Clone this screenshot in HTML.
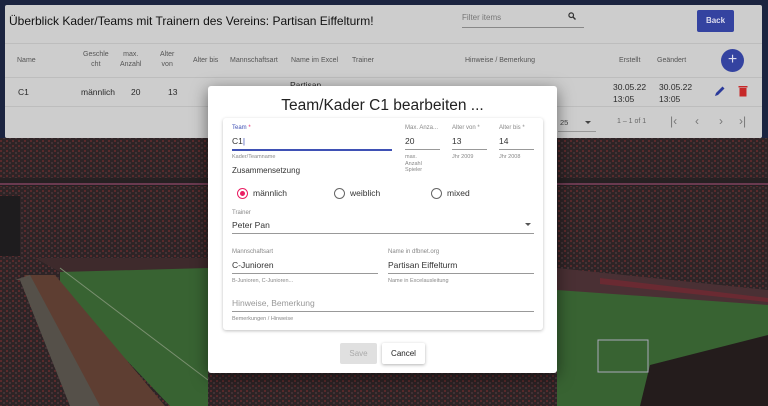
<!DOCTYPE html>
<html><head><meta charset="utf-8"><style>
*{box-sizing:border-box;margin:0;padding:0}
body{width:768px;height:406px;overflow:hidden;position:relative;font-family:"Liberation Sans",sans-serif;background:#1b2440}
.abs{position:absolute}
.card{left:5px;top:5px;width:757px;height:133px;background:#cdcdcd;border-radius:2px}
.t{color:#2a2a2a}
.hd{font-size:7px;color:#555;text-align:center;line-height:10px}
.dlg{left:208px;top:86px;width:349px;height:287px;background:#fff;border-radius:3px;box-shadow:0 4px 16px rgba(0,0,0,.5)}
.inner{left:15px;top:32px;width:320px;height:212px;background:#fff;border-radius:3px;box-shadow:0 1px 3px rgba(0,0,0,.25)}
.lbl{font-size:6px;color:#888}
.val{font-size:8.5px;color:#333}
.ln{height:1px;background:#999}
.hint{font-size:5.5px;color:#888;line-height:6.5px}
.radio{width:11px;height:11px;border-radius:50%;border:1.5px solid #666}
.pg{font-size:12px;color:#777;white-space:nowrap}
</style></head><body>
<svg class="abs" style="left:0;top:0" width="768" height="406">
<defs>
<pattern id="crowd" width="6" height="5" patternUnits="userSpaceOnUse">
<rect width="6" height="5" fill="#2e2426"/>
<rect x="0" y="0" width="2" height="2" fill="#5a2a2c"/>
<rect x="3" y="2" width="2" height="2" fill="#443236"/>
</pattern>
</defs>
<rect x="0" y="0" width="768" height="406" fill="#1b2440"/>
<rect x="0" y="138" width="768" height="268" fill="url(#crowd)"/>
<rect x="0" y="178" width="768" height="8" fill="#262022"/>
<rect x="0" y="183" width="768" height="2" fill="#6a3a50"/>
<rect x="0" y="196" width="20" height="60" fill="#1e1c1e"/>
<polygon points="60,265 208,262 208,406 170,406 60,290" fill="#386332"/>
<polygon points="35,258 208,258 208,268 60,272" fill="#3e2a2c"/>
<polygon points="25,275 55,275 165,406 90,406 25,300" fill="#5e3e32"/>
<polygon points="15,280 30,275 100,406 60,406" fill="#555049"/>
<polygon points="0,280 20,280 70,406 0,406" fill="url(#crowd)"/>
<polygon points="557,285 768,300 768,340 720,360 640,406 557,406" fill="#386332"/>
<polygon points="557,268 768,290 768,305 557,290" fill="#4a3034"/>
<polygon points="600,278 768,298 768,302 600,284" fill="#6a2a32"/>
<polygon points="650,365 768,335 768,406 640,406" fill="#241c1c"/>
<rect x="598" y="340" width="50" height="32" fill="none" stroke="#aab" stroke-width="1"/>
<line x1="60" y1="268" x2="208" y2="380" stroke="#7a9070" stroke-width="1"/>
</svg>
<div class="abs card">
  <div class="abs t" style="left:4px;top:9px;font-size:12px;color:#111">Überblick Kader/Teams mit Trainern des Vereins: Partisan Eiffelturm!</div>
  <div class="abs" style="left:457px;top:8px;font-size:8px;color:#777">Filter items</div>
  <div class="abs" style="left:457px;top:22px;width:122px;height:1px;background:#888"></div>
  <svg class="abs" style="left:563px;top:7px" width="8" height="8"><circle cx="3.2" cy="3.2" r="2.3" stroke="#333" stroke-width="1.2" fill="none"/><line x1="5" y1="5" x2="7.5" y2="7.5" stroke="#333" stroke-width="1.4"/></svg>
  <div class="abs" style="left:692px;top:5px;width:37px;height:22px;background:#3443a0;border-radius:2px;color:#dde;font-size:8px;font-weight:bold;text-align:center;line-height:22px">Back</div>
  <div class="abs" style="left:0;top:38px;width:757px;height:1px;background:#bdbdbd"></div>
  <div class="abs hd" style="left:12px;top:51px">Name</div>
  <div class="abs hd" style="left:78px;top:45px">Geschle<br>cht</div>
  <div class="abs hd" style="left:115px;top:45px">max.<br>Anzahl</div>
  <div class="abs hd" style="left:155px;top:45px">Alter<br>von</div>
  <div class="abs hd" style="left:188px;top:51px">Alter bis</div>
  <div class="abs hd" style="left:225px;top:51px">Mannschaftsart</div>
  <div class="abs hd" style="left:286px;top:51px">Name im Excel</div>
  <div class="abs hd" style="left:347px;top:51px">Trainer</div>
  <div class="abs hd" style="left:460px;top:51px">Hinweise / Bemerkung</div>
  <div class="abs hd" style="left:614px;top:51px">Erstellt</div>
  <div class="abs hd" style="left:652px;top:51px">Geändert</div>
  <div class="abs" style="left:716px;top:44px;width:23px;height:23px;border-radius:50%;background:#3443a0;color:#dde;font-size:16px;text-align:center;line-height:22px">+</div>
  <div class="abs" style="left:0;top:72px;width:757px;height:1px;background:#bdbdbd"></div>
  <div class="abs t" style="left:13px;top:82px;font-size:8.5px">C1</div>
  <div class="abs t" style="left:76px;top:82px;font-size:8.5px">männlich</div>
  <div class="abs t" style="left:126px;top:82px;font-size:8.5px">20</div>
  <div class="abs t" style="left:163px;top:82px;font-size:8.5px">13</div>
  <div class="abs t" style="left:285px;top:75px;font-size:8.5px">Partisan</div>
  <div class="abs t" style="left:608px;top:76px;font-size:8.5px;line-height:12px">30.05.22<br>13:05</div>
  <div class="abs t" style="left:654px;top:76px;font-size:8.5px;line-height:12px">30.05.22<br>13:05</div>
  <svg class="abs" style="left:709px;top:80px" width="12" height="12"><path d="M1 11 L2 8 L8.5 1.5 L10.5 3.5 L4 10 Z" fill="#2b3a9a"/></svg>
  <svg class="abs" style="left:733px;top:80px" width="10" height="12"><rect x="0.5" y="1" width="9" height="1.5" fill="#c62828"/><rect x="1.5" y="3" width="7" height="8.5" fill="#c62828"/></svg>
  <div class="abs" style="left:0;top:101px;width:757px;height:1px;background:#bdbdbd"></div>
  <div class="abs" style="left:555px;top:113px;font-size:7.5px;color:#444">25</div>
  <div class="abs" style="left:580px;top:116px;border-left:3px solid transparent;border-right:3px solid transparent;border-top:3px solid #444"></div>
  <div class="abs" style="left:553px;top:126px;width:38px;height:1px;background:#999"></div>
  <div class="abs" style="left:612px;top:113px;font-size:7px;color:#666">1 – 1 of 1</div>
  <div class="abs pg" style="left:665px;top:109px">|‹</div>
  <div class="abs pg" style="left:690px;top:109px">‹</div>
  <div class="abs pg" style="left:714px;top:109px">›</div>
  <div class="abs pg" style="left:734px;top:109px">›|</div>
</div>
<div class="abs dlg">
  <div class="abs" style="left:0;top:11px;width:349px;text-align:center;font-size:15.5px;color:#222">Team/Kader C1 bearbeiten ...</div>
  <div class="abs inner">
    <div class="abs lbl" style="left:9px;top:7px;color:#3f51b5">Team <span style="color:#e91e63">*</span></div>
    <div class="abs val" style="left:9px;top:18px">C1<span style="color:#3f51b5">|</span></div>
    <div class="abs" style="left:9px;top:31px;width:160px;height:2px;background:#3f51b5"></div>
    <div class="abs hint" style="left:9px;top:36px">Kader/Teamname</div>
    <div class="abs" style="left:9px;top:48px;font-size:8px;color:#333">Zusammensetzung</div>
    <div class="abs lbl" style="left:182px;top:7px">Max. Anza...</div>
    <div class="abs val" style="left:182px;top:18px">20</div>
    <div class="abs ln" style="left:182px;top:31px;width:35px"></div>
    <div class="abs hint" style="left:182px;top:36px">max.<br>Anzahl<br>Spieler</div>
    <div class="abs lbl" style="left:229px;top:7px">Alter von *</div>
    <div class="abs val" style="left:229px;top:18px">13</div>
    <div class="abs ln" style="left:229px;top:31px;width:35px"></div>
    <div class="abs hint" style="left:229px;top:36px">Jhr 2009</div>
    <div class="abs lbl" style="left:276px;top:7px">Alter bis *</div>
    <div class="abs val" style="left:276px;top:18px">14</div>
    <div class="abs ln" style="left:276px;top:31px;width:35px"></div>
    <div class="abs hint" style="left:276px;top:36px">Jhr 2008</div>
    <div class="abs radio" style="left:14px;top:70px;border-color:#e91e63"><div style="width:5px;height:5px;border-radius:50%;background:#e91e63;margin:1.5px"></div></div>
    <div class="abs val" style="left:30px;top:70px">männlich</div>
    <div class="abs radio" style="left:111px;top:70px"></div>
    <div class="abs val" style="left:127px;top:70px">weiblich</div>
    <div class="abs radio" style="left:208px;top:70px"></div>
    <div class="abs val" style="left:224px;top:70px">mixed</div>
    <div class="abs lbl" style="left:9px;top:92px">Trainer</div>
    <div class="abs val" style="left:9px;top:102px">Peter Pan</div>
    <div class="abs" style="left:302px;top:105px;border-left:3px solid transparent;border-right:3px solid transparent;border-top:3px solid #555"></div>
    <div class="abs ln" style="left:9px;top:115px;width:302px"></div>
    <div class="abs lbl" style="left:9px;top:131px">Mannschaftsart</div>
    <div class="abs val" style="left:9px;top:142px">C-Junioren</div>
    <div class="abs ln" style="left:9px;top:155px;width:146px"></div>
    <div class="abs hint" style="left:9px;top:160px">B-Junioren, C-Junioren...</div>
    <div class="abs lbl" style="left:165px;top:131px">Name in dfbnet.org</div>
    <div class="abs val" style="left:165px;top:142px">Partisan Eiffelturm</div>
    <div class="abs ln" style="left:165px;top:155px;width:146px"></div>
    <div class="abs hint" style="left:165px;top:160px">Name in Excelausleitung</div>
    <div class="abs" style="left:9px;top:180px;font-size:8.5px;color:#999">Hinweise, Bemerkung</div>
    <div class="abs ln" style="left:9px;top:193px;width:302px"></div>
    <div class="abs hint" style="left:9px;top:198px">Bemerkungen / Hinweise</div>
  </div>
  <div class="abs" style="left:132px;top:257px;width:37px;height:21px;background:#e0e0e0;border-radius:2px;font-size:8px;color:#aaa;text-align:center;line-height:21px">Save</div>
  <div class="abs" style="left:174px;top:257px;width:43px;height:21px;background:#fff;border-radius:2px;box-shadow:0 1px 3px rgba(0,0,0,.3);font-size:8px;color:#222;text-align:center;line-height:21px">Cancel</div>
</div>
</body></html>
